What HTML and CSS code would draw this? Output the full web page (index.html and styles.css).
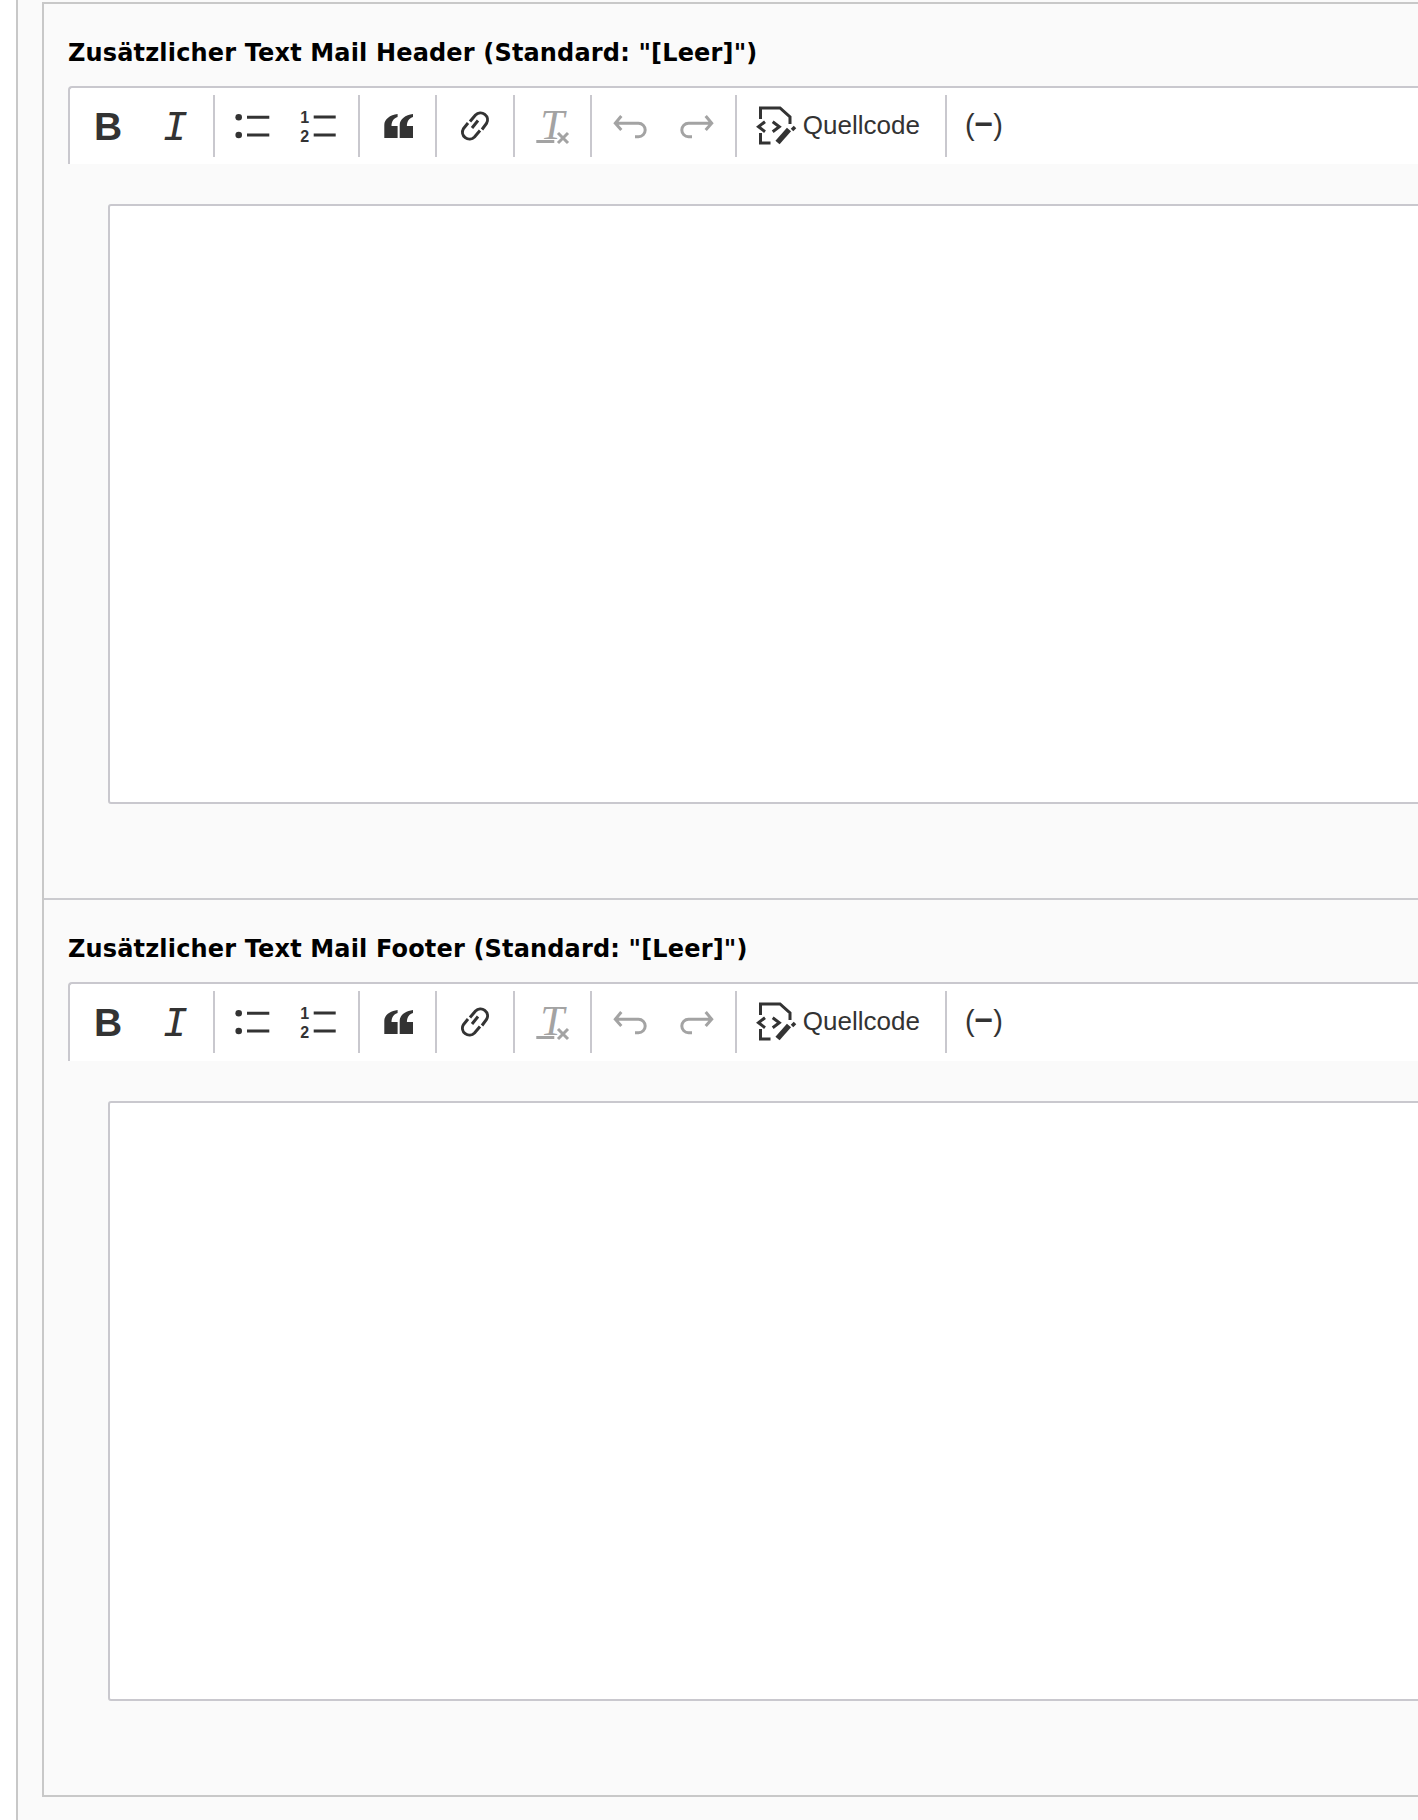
FILE: index.html
```html
<!DOCTYPE html>
<html lang="de">
<head>
<meta charset="utf-8" />
<title>Zusätzlicher Text Mail</title>
<link rel="stylesheet" href="styles.css">
</head>
<body>
<div class="outer">
  <div class="fieldset">

    <div class="field">
      <div class="field-title">Zusätzlicher Text Mail Header (Standard: "[Leer]")</div>
      <div class="toolbar">
        <div class="group">
          <span class="btn"><svg class="ico" viewBox="0 0 40 40"><text class="t-bold" x="20" y="34" text-anchor="middle">B</text></svg></span>
          <span class="btn"><svg class="ico" viewBox="0 0 40 40"><text class="t-ital" x="20" y="34" text-anchor="middle">I</text></svg></span>
        </div>
        <div class="group">
          <span class="btn"><svg class="ico" viewBox="0 0 40 40"><circle class="fill" cx="5.7" cy="11.3" r="3.3"/><circle class="fill" cx="5.7" cy="29" r="3.3"/><path class="line" d="M14 11.3H36.3M14 29H36.3"/></svg></span>
          <span class="btn"><svg class="ico" viewBox="0 0 40 40"><text class="t-num" x="4.7" y="16.5" text-anchor="middle">1</text><text class="t-num" x="4.7" y="36" text-anchor="middle">2</text><path class="line" d="M13.7 11H35.7M13.7 29H35.7"/></svg></span>
        </div>
        <div class="group">
          <span class="btn"><svg class="ico" viewBox="0 0 40 40"><path class="fill" d="M6.3 32V19C6.3 13 12 9 19.6 8V11C16 12 13.5 15 13.5 20H19.6V32Z"/><path class="fill" d="M21.7 32V19C21.7 13 27.4 9 35 8V11C31.4 12 28.9 15 28.9 20H35V32Z"/></svg></span>
        </div>
        <div class="group">
          <span class="btn"><svg class="ico" viewBox="0 0 40 40"><path class="line" d="M15 15.5L20.5 9A7 7 0 0 1 31.5 17.5L27 23.5M13 17L8.5 22.5A7 7 0 0 0 19.5 31L25 24.5M17 22L23 14.5"/></svg></span>
        </div>
        <div class="group">
          <span class="btn"><svg class="ico" viewBox="0 0 40 40"><text class="t-clear" x="20.3" y="33" text-anchor="middle">T</text><path class="line-off" d="M4.3 35.5H22.3M26 27L36 37M36 27L26 37"/></svg></span>
        </div>
        <div class="group">
          <span class="btn"><svg class="ico" viewBox="0 0 40 40"><path class="line-off" d="M11.3 10L5.3 17.3L11.3 24M5.5 17.3H28.5A6.7 6.7 0 0 1 28.5 30.7H25"/></svg></span>
          <span class="btn"><svg class="ico" viewBox="0 0 40 40"><path class="line-off" d="M28.7 10L34.7 17.3L28.7 24M34.5 17.3H11.5A6.7 6.7 0 0 0 11.5 30.7H15"/></svg></span>
        </div>
        <div class="group group-source">
          <svg class="ico" viewBox="0 0 40 40"><path class="line" d="M3.5 13V2H23L33 11V18M3.5 27V37H13.5M8 15.7L1.5 20.7L8 25.7M15.7 15.7L22.3 20.7L15.7 25.7"/><path class="pen" d="M20.5 36.5L32 23.5"/><path class="pen-tip" d="M35 24L38 21"/></svg>
          <span class="btn-label">Quellcode</span>
        </div>
        <div class="group group-hyphen">
          <span class="btn-label">(<b class="minus">−</b>)</span>
        </div>
      </div>
      <div class="editor"></div>
    </div>

    <div class="field field-last">
      <div class="field-title">Zusätzlicher Text Mail Footer (Standard: "[Leer]")</div>
      <div class="toolbar">
        <div class="group">
          <span class="btn"><svg class="ico" viewBox="0 0 40 40"><text class="t-bold" x="20" y="34" text-anchor="middle">B</text></svg></span>
          <span class="btn"><svg class="ico" viewBox="0 0 40 40"><text class="t-ital" x="20" y="34" text-anchor="middle">I</text></svg></span>
        </div>
        <div class="group">
          <span class="btn"><svg class="ico" viewBox="0 0 40 40"><circle class="fill" cx="5.7" cy="11.3" r="3.3"/><circle class="fill" cx="5.7" cy="29" r="3.3"/><path class="line" d="M14 11.3H36.3M14 29H36.3"/></svg></span>
          <span class="btn"><svg class="ico" viewBox="0 0 40 40"><text class="t-num" x="4.7" y="16.5" text-anchor="middle">1</text><text class="t-num" x="4.7" y="36" text-anchor="middle">2</text><path class="line" d="M13.7 11H35.7M13.7 29H35.7"/></svg></span>
        </div>
        <div class="group">
          <span class="btn"><svg class="ico" viewBox="0 0 40 40"><path class="fill" d="M6.3 32V19C6.3 13 12 9 19.6 8V11C16 12 13.5 15 13.5 20H19.6V32Z"/><path class="fill" d="M21.7 32V19C21.7 13 27.4 9 35 8V11C31.4 12 28.9 15 28.9 20H35V32Z"/></svg></span>
        </div>
        <div class="group">
          <span class="btn"><svg class="ico" viewBox="0 0 40 40"><path class="line" d="M15 15.5L20.5 9A7 7 0 0 1 31.5 17.5L27 23.5M13 17L8.5 22.5A7 7 0 0 0 19.5 31L25 24.5M17 22L23 14.5"/></svg></span>
        </div>
        <div class="group">
          <span class="btn"><svg class="ico" viewBox="0 0 40 40"><text class="t-clear" x="20.3" y="33" text-anchor="middle">T</text><path class="line-off" d="M4.3 35.5H22.3M26 27L36 37M36 27L26 37"/></svg></span>
        </div>
        <div class="group">
          <span class="btn"><svg class="ico" viewBox="0 0 40 40"><path class="line-off" d="M11.3 10L5.3 17.3L11.3 24M5.5 17.3H28.5A6.7 6.7 0 0 1 28.5 30.7H25"/></svg></span>
          <span class="btn"><svg class="ico" viewBox="0 0 40 40"><path class="line-off" d="M28.7 10L34.7 17.3L28.7 24M34.5 17.3H11.5A6.7 6.7 0 0 0 11.5 30.7H15"/></svg></span>
        </div>
        <div class="group group-source">
          <svg class="ico" viewBox="0 0 40 40"><path class="line" d="M3.5 13V2H23L33 11V18M3.5 27V37H13.5M8 15.7L1.5 20.7L8 25.7M15.7 15.7L22.3 20.7L15.7 25.7"/><path class="pen" d="M20.5 36.5L32 23.5"/><path class="pen-tip" d="M35 24L38 21"/></svg>
          <span class="btn-label">Quellcode</span>
        </div>
        <div class="group group-hyphen">
          <span class="btn-label">(<b class="minus">−</b>)</span>
        </div>
      </div>
      <div class="editor"></div>
    </div>

  </div>
</div>
</body>
</html>
```

FILE: styles.css
```css
*{ margin:0; padding:0; box-sizing:border-box;}
html,body{ height:1820px; overflow:hidden; background:#fff;}
body{ padding-left:16px; font-family:"Liberation Sans",Arial,sans-serif;}

.outer{ height:1820px; background:#fafafa; border-left:2px solid #c8c8c8; padding:2px 0 0 24px;}
.fieldset{ border:2px solid #c8c8c8; border-right:0; height:1795px;}

.field{ padding:0 0 94px 24px; border-bottom:2px solid #cbcbcf;}
.field-last{ border-bottom:0;}
.field-title{ padding-top:33px; margin-bottom:17px; font:bold 24px/32px "DejaVu Sans",Verdana,sans-serif; letter-spacing:.16px; color:#000; white-space:nowrap;}

.toolbar{ display:flex; height:78px; background:#fff; border-top:2px solid #c9c8ce; border-left:2px solid #c9c8ce; border-top-left-radius:4px;}
.group{ display:flex; align-items:center; height:62px; margin-top:7px; padding:0 3.83px; border-right:2px solid #c9c8ce;}
.btn{ display:flex; justify-content:center; width:67.67px;}
.group-source{ padding:0 25px 0 20px;}
.group-hyphen{ padding:0 0 0 18px; border-right:0;}
.btn-label{ margin:-2px 0 0 6px; font-size:26px; line-height:62px; color:#333; white-space:nowrap;}
.group-hyphen .btn-label{ margin-left:0; font-size:29px;}
.minus{ font-size:32px; line-height:0;}

.ico{ display:block; width:40px; height:40px; overflow:visible;}
.fill{ fill:#333;}
.line{ fill:none; stroke:#333; stroke-width:3;}
.line-off{ fill:none; stroke:#a3a3a3; stroke-width:3;}
.pen{ fill:none; stroke:#333; stroke-width:5.5;}
.pen-tip{ fill:none; stroke:#333; stroke-width:3.5;}
.t-bold{ font:700 39px "Liberation Sans",sans-serif; fill:#333;}
.t-ital{ font:italic 400 42px "Liberation Mono",monospace; fill:#333;}
.t-num{ font:700 16px "Liberation Sans",sans-serif; fill:#333;}
.t-clear{ font:italic 400 43px "Liberation Serif",serif; fill:#a3a3a3;}

.editor{ height:600px; margin:40px -100px 0 40px; background:#fff; border:2px solid #c9c8ce; border-radius:3px;}
.field-last .toolbar{ height:79px;}
```
